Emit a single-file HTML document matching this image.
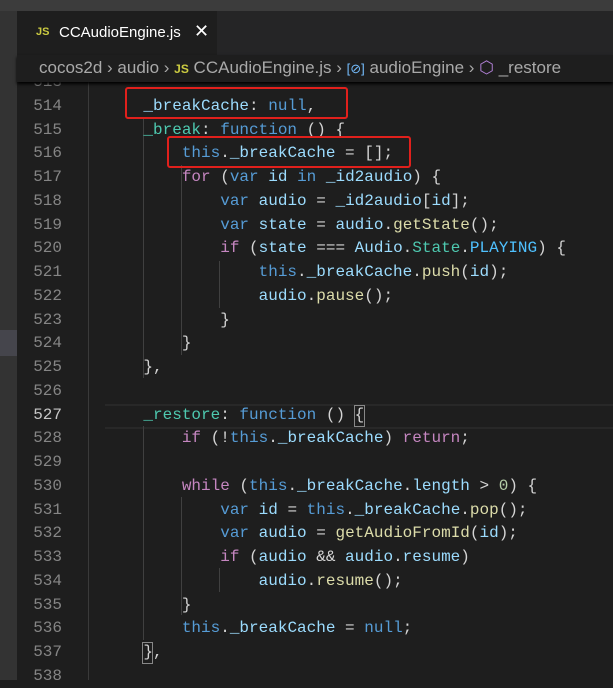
<!DOCTYPE html>
<html><head><meta charset="utf-8"><style>
body{margin:0;width:613px;height:680px;overflow:hidden;background:#1e1e1e;position:relative;font-family:"Liberation Mono",monospace;}
.top{position:absolute;left:0;top:0;width:613px;height:11px;background:#3c3c3c}
.act{position:absolute;left:0;top:11px;width:17px;height:669px;background:#333}
.actsel{position:absolute;left:0;top:330px;width:17px;height:26px;background:#45454c}
.tabbar{position:absolute;left:17px;top:11px;width:596px;height:44px;background:#252526}
.tab{position:absolute;left:17px;top:11px;width:200px;height:44px;background:#1e1e1e;font-family:"Liberation Sans",sans-serif;font-size:15px;color:#fff}
.bc{position:absolute;left:17px;top:55px;width:596px;height:27px;background:#1e1e1e;font-family:"Liberation Sans",sans-serif;font-size:17px;color:#a9a9a9;box-shadow:0 2px 3px #000;z-index:3}
.js{color:#cbcb41;font-weight:bold;font-size:12px}
.gut{position:absolute;left:88px;top:82px;width:1px;height:598px;background:#3a3a3a}
.ln{position:absolute;left:20px;width:42px;text-align:right;color:#858585;font-size:16px;line-height:24px}
.cl{position:absolute;left:105px;white-space:pre;color:#d4d4d4;font-size:16px;line-height:24px}
.g{position:absolute;width:1px;background:#404040}
.p{color:#9cdcfe}.k{color:#569cd6}.c{color:#c586c0}.f{color:#dcdcaa}.t{color:#4ec9b0}.n{color:#b5cea8}.q{color:#4fc1ff}
.box{position:absolute;border:2px solid #e0201c;border-radius:3px;z-index:4}
.cur{position:absolute;left:105px;top:404px;width:508px;height:21px;border-top:2px solid #282828;border-bottom:2px solid #282828}
.bm{position:absolute;border:1px solid #888;}
</style></head><body>
<div class="top"></div>
<div class="act"></div><div class="actsel"></div>
<div class="tabbar"></div>
<div class="tab"><span class="js" style="position:absolute;left:19px;top:15px;font-size:11px">JS</span><span style="position:absolute;left:42px;top:13px">CCAudioEngine.js</span><span style="position:absolute;left:177px;top:10px;font-size:18px">✕</span></div>
<div class="bc"><span style="position:absolute;left:22px;top:3px;white-space:nowrap">cocos2d › audio › <span class="js">JS</span> CCAudioEngine.js › <span style="color:#75beff;font-size:13px">[⊘]</span> audioEngine › <span style="color:#b180d7">⬡</span> _restore</span></div>
<div class="gut"></div>
<div class="cur"></div>
<div class="g" style="left:143px;top:118px;height:260px"></div>
<div class="g" style="left:181px;top:165px;height:190px"></div>
<div class="g" style="left:219px;top:261px;height:47px"></div>
<div class="g" style="left:143px;top:426px;height:214px"></div>
<div class="g" style="left:181px;top:497px;height:118px"></div>
<div class="g" style="left:219px;top:568px;height:24px"></div>
<div class="ln" style="top:70px">513</div>
<div class="ln" style="top:94px">514</div><div class="cl" style="top:94px">    <span class="p">_breakCache</span>: <span class="k">null</span>,</div>
<div class="ln" style="top:118px">515</div><div class="cl" style="top:118px">    <span class="t">_break</span>: <span class="k">function</span> () {</div>
<div class="ln" style="top:141px">516</div><div class="cl" style="top:141px">        <span class="k">this</span>.<span class="p">_breakCache</span> = [];</div>
<div class="ln" style="top:165px">517</div><div class="cl" style="top:165px">        <span class="c">for</span> (<span class="k">var</span> <span class="p">id</span> <span class="k">in</span> <span class="p">_id2audio</span>) {</div>
<div class="ln" style="top:189px">518</div><div class="cl" style="top:189px">            <span class="k">var</span> <span class="p">audio</span> = <span class="p">_id2audio</span>[<span class="p">id</span>];</div>
<div class="ln" style="top:213px">519</div><div class="cl" style="top:213px">            <span class="k">var</span> <span class="p">state</span> = <span class="p">audio</span>.<span class="f">getState</span>();</div>
<div class="ln" style="top:236px">520</div><div class="cl" style="top:236px">            <span class="c">if</span> (<span class="p">state</span> === <span class="p">Audio</span>.<span class="t">State</span>.<span class="q">PLAYING</span>) {</div>
<div class="ln" style="top:260px">521</div><div class="cl" style="top:260px">                <span class="k">this</span>.<span class="p">_breakCache</span>.<span class="f">push</span>(<span class="p">id</span>);</div>
<div class="ln" style="top:284px">522</div><div class="cl" style="top:284px">                <span class="p">audio</span>.<span class="f">pause</span>();</div>
<div class="ln" style="top:308px">523</div><div class="cl" style="top:308px">            }</div>
<div class="ln" style="top:331px">524</div><div class="cl" style="top:331px">        }</div>
<div class="ln" style="top:355px">525</div><div class="cl" style="top:355px">    },</div>
<div class="ln" style="top:379px">526</div>
<div class="ln" style="top:403px;color:#c6c6c6">527</div><div class="cl" style="top:403px">    <span class="t">_restore</span>: <span class="k">function</span> () {</div>
<div class="bm" style="left:354px;top:405px;width:9px;height:20px"></div>
<div class="ln" style="top:426px">528</div><div class="cl" style="top:426px">        <span class="c">if</span> (!<span class="k">this</span>.<span class="p">_breakCache</span>) <span class="c">return</span>;</div>
<div class="ln" style="top:450px">529</div>
<div class="ln" style="top:474px">530</div><div class="cl" style="top:474px">        <span class="c">while</span> (<span class="k">this</span>.<span class="p">_breakCache</span>.<span class="p">length</span> &gt; <span class="n">0</span>) {</div>
<div class="ln" style="top:498px">531</div><div class="cl" style="top:498px">            <span class="k">var</span> <span class="p">id</span> = <span class="k">this</span>.<span class="p">_breakCache</span>.<span class="f">pop</span>();</div>
<div class="ln" style="top:521px">532</div><div class="cl" style="top:521px">            <span class="k">var</span> <span class="p">audio</span> = <span class="f">getAudioFromId</span>(<span class="p">id</span>);</div>
<div class="ln" style="top:545px">533</div><div class="cl" style="top:545px">            <span class="c">if</span> (<span class="p">audio</span> &amp;&amp; <span class="p">audio</span>.<span class="p">resume</span>)</div>
<div class="ln" style="top:569px">534</div><div class="cl" style="top:569px">                <span class="p">audio</span>.<span class="f">resume</span>();</div>
<div class="ln" style="top:593px">535</div><div class="cl" style="top:593px">        }</div>
<div class="ln" style="top:616px">536</div><div class="cl" style="top:616px">        <span class="k">this</span>.<span class="p">_breakCache</span> = <span class="k">null</span>;</div>
<div class="ln" style="top:640px">537</div><div class="cl" style="top:640px">    },</div>
<div class="bm" style="left:142px;top:642px;width:9px;height:20px"></div>
<div class="ln" style="top:664px">538</div>
<div class="box" style="left:125px;top:87px;width:219px;height:28px"></div>
<div class="box" style="left:167px;top:136px;width:240px;height:28px"></div>
</body></html>
